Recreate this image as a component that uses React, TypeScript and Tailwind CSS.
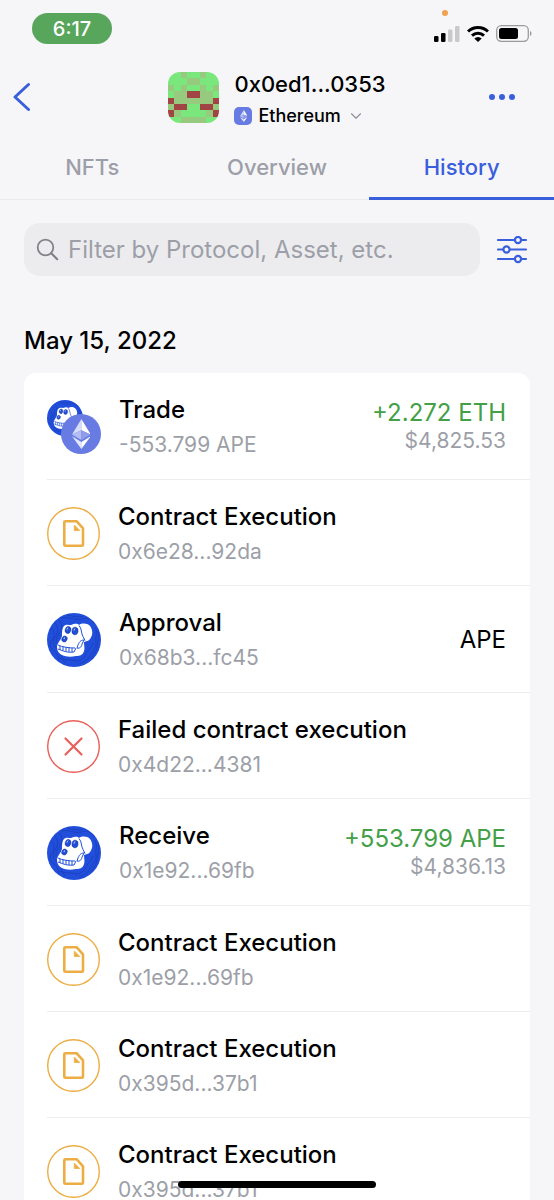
import { useState } from "react";
import { ChevronDown } from "lucide-react";

type TxKind = "trade" | "contract" | "ape" | "failed";

interface Transaction {
  id: number;
  kind: TxKind;
  title: string;
  detail: string;
  amount?: string;
  value?: string;
}

const transactions: Transaction[] = [
  { id: 1, kind: "trade", title: "Trade", detail: "-553.799 APE", amount: "+2.272 ETH", value: "$4,825.53" },
  { id: 2, kind: "contract", title: "Contract Execution", detail: "0x6e28...92da" },
  { id: 3, kind: "ape", title: "Approval", detail: "0x68b3...fc45", amount: "APE" },
  { id: 4, kind: "failed", title: "Failed contract execution", detail: "0x4d22...4381" },
  { id: 5, kind: "ape", title: "Receive", detail: "0x1e92...69fb", amount: "+553.799 APE", value: "$4,836.13" },
  { id: 6, kind: "contract", title: "Contract Execution", detail: "0x1e92...69fb" },
  { id: 7, kind: "contract", title: "Contract Execution", detail: "0x395d...37b1" },
  { id: 8, kind: "contract", title: "Contract Execution", detail: "0x395d...37b1" },
];

const tabs = ["NFTs", "Overview", "History"];

// left half of the identicon, the right half is mirrored
const blockie = ["ggmg", "gggm", "mgmg", "gmmr", "rmmm", "mrrg", "rmgg", "ggmm"];
const blockieColors: Record<string, string> = { g: "#79e77b", m: "#97c97f", r: "#a04444" };

function Blockie() {
  return (
    <svg viewBox="0 0 8 8" className="size-[51px] rounded-xl" shapeRendering="crispEdges">
      {blockie.map((row, y) =>
        [...row, ...[...row].reverse()].map((c, x) => (
          <rect key={`${x}-${y}`} x={x} y={y} width="1" height="1" fill={blockieColors[c]} />
        ))
      )}
    </svg>
  );
}

function EthDiamond({ className }: { className: string }) {
  return (
    <svg viewBox="0 0 20 32" className={className}>
      <path d="M10 0 0 16.5 10 12Z" fill="#d7dcf8" />
      <path d="M10 0v12l10 4.5Z" fill="#ffffff" />
      <path d="M0 16.5 10 12v10.4Z" fill="#b3bdf1" />
      <path d="M10 12l10 4.5-10 5.9Z" fill="#8e9ceb" />
      <path d="M0 18.5 10 24.4V32Z" fill="#e3e7fb" />
      <path d="M20 18.5 10 24.4V32Z" fill="#ffffff" />
    </svg>
  );
}

function ApeIcon({ className }: { className: string }) {
  return (
    <svg viewBox="0 0 54 54" className={className}>
      <circle cx="27" cy="27" r="27" fill="#214fdb" />
      <g fill="none" stroke="#1b3fbd" strokeWidth="0.9">
        <path d="M4 15c4 3 4 8 1 12s-2 8 2 11 4 7 5 10" />
        <path d="M8 10c4 4 3 10 0 14s-2 9 2 12 4 9 8 14" />
        <path d="M12 7c4 4 3 10 0 14s-3 7-3 10" />
        <path d="M14 5c8-2 13 3 20 1s10 0 14 5" />
        <path d="M20 2c6 1 10 3 16 1" />
        <path d="M48 14c3 5 0 10 1 15s-4 10-6 14-6 6-11 8" />
        <path d="M51 18c2 6-1 12-1 16s-4 8-6 12" />
        <path d="M46 30c-1 5-5 6-7 11s-6 6-10 8M12 45c6 3 12 1 18 3" />
      </g>
      <path
        d="M17 13c2-2 5-1 7-1 3-1 6-2 8 0 3-2 8-2 11 1 3 4 3 9 0 13-1 2-4 2-6 3 0 3 1 7 0 9-1 4-4 5-8 5-5 1-10 1-14-1-4-2-5-5-5-9 1-4 4-6 5-10 0-4 0-8 2-10Z"
        fill="#fff"
      />
      <g fill="#214fdb" stroke="#16349f" strokeWidth="0.6">
        <ellipse cx="21" cy="17" rx="2.8" ry="3.5" transform="rotate(15 21 17)" />
        <ellipse cx="28" cy="18" rx="3" ry="3.7" transform="rotate(10 28 18)" />
        <ellipse cx="17.5" cy="26" rx="2.6" ry="3" transform="rotate(25 17.5 26)" />
      </g>
      <g fill="none" stroke="#fff" strokeWidth="0.8">
        <path d="M20 16.500c0-1 .6-1.600 1.200-1.800M27 17.500c0-1 .6-1.700 1.200-2M17 26c0-.8.400-1.200 1-1.400" />
      </g>
      <g fill="none" stroke="#214fdb" strokeWidth="1">
        <path d="M32 12.500c3 3 2 8 4 11l2 4M37 27c-4 0-5 3-6 5l-1 3c3 1 5-2 5-4Z" />
        <path d="M11 32c4 2 11 3 17 3M11 36c5 2 10 4 16 3l2-4" />
        <path d="M13 33v4M16 33.500v4M19 34v4.500M22 34.500v4.500M25 35v4" />
      </g>
    </svg>
  );
}

function TxIcon({ kind }: { kind: TxKind }) {
  if (kind === "trade") {
    return (
      <div className="relative size-[54px] shrink-0">
        <ApeIcon className="size-9" />
        <span className="absolute right-0 bottom-0 flex size-10 items-center justify-center rounded-full bg-[#677be3]">
          <EthDiamond className="h-[30px]" />
        </span>
      </div>
    );
  }
  if (kind === "ape") return <ApeIcon className="size-[54px] shrink-0" />;
  if (kind === "failed") {
    return (
      <svg viewBox="0 0 53 53" fill="none" stroke="#e9605a" className="size-[53px] shrink-0">
        <circle cx="26.5" cy="26.5" r="25.8" strokeWidth="1.4" />
        <path d="m18.5 18.5 16 16m0-16-16 16" strokeWidth="2.2" strokeLinecap="round" />
      </svg>
    );
  }
  return (
    <svg viewBox="0 0 53 53" fill="none" stroke="#ecae44" className="size-[53px] shrink-0">
      <circle cx="26.5" cy="26.5" r="25.8" strokeWidth="1.4" />
      <path d="M18.300 14.300h11.500l6.200 7v16.400a1 1 0 0 1-1 1H18.300a1 1 0 0 1-1-1V15.300a1 1 0 0 1 1-1Z" strokeWidth="2.600" strokeLinejoin="round" />
      <path d="M27.300 18v5.500h5.500Z" fill="#ecae44" strokeWidth="0.800" strokeLinejoin="round" />
    </svg>
  );
}

function StatusBar() {
  return (
    <div className="flex h-[57px] items-start justify-between pl-8 pr-[22px]">
      <div className="mt-[13px] flex h-[31px] w-20 items-center justify-center rounded-full bg-[#58a55c] text-xl font-medium text-white">
        6:17
      </div>
      <div className="flex flex-col items-start">
        <span className="mt-[10px] ml-2 size-[6px] rounded-full bg-[#f0a24e]" />
        <div className="mt-[9px] flex items-center gap-[7px]">
          <svg viewBox="0 0 26 17" className="h-[17px] w-[26px]">
            <rect x="0" y="11" width="4.500" height="6" rx="1.300" />
            <rect x="7" y="8" width="4.500" height="9" rx="1.300" />
            <rect x="14" y="4.500" width="4.500" height="12.500" rx="1.300" fill="#c9c9cb" />
            <rect x="21" y="1" width="4.500" height="16" rx="1.300" fill="#c9c9cb" />
          </svg>
          <svg viewBox="0 0 22 16" className="h-4 w-[22px]">
            <g fill="none" stroke="#000" strokeWidth="3">
              <path d="M1 5.500a14.500 14.500 0 0 1 20 0" />
              <path d="M5 9.700a8.800 8.800 0 0 1 12 0" />
            </g>
            <path d="M11 16 7.300 12.400a5.300 5.300 0 0 1 7.400 0Z" />
          </svg>
          <svg viewBox="0 0 36 17" className="h-[17px] w-9">
            <rect x="0.700" y="0.700" width="31.600" height="15.600" rx="4.500" fill="none" stroke="#9b9b9e" strokeWidth="1.300" />
            <rect x="3" y="3" width="19" height="11" rx="2.500" />
            <path d="M34 6v5c2-.8 2-4.200 0-5Z" fill="#9b9b9e" />
          </svg>
        </div>
      </div>
    </div>
  );
}

function AccountHeader() {
  return (
    <header className="grid h-20 grid-cols-[1fr_auto_1fr] items-center px-3">
      <button aria-label="Back" className="justify-self-start">
        <svg viewBox="0 0 18 30" fill="none" stroke="#3a5fdc" strokeWidth="3" strokeLinecap="round" strokeLinejoin="round" className="h-[30px] w-[18px]">
          <path d="M16.500 2.500 3 15l13.500 12.500" />
        </svg>
      </button>
      <div className="flex items-center gap-[15px]">
        <Blockie />
        <div className="pt-[6px]">
          <div className="text-[22px] leading-7 font-medium">0x0ed1...0353</div>
          <button className="mt-1 flex items-center gap-[6px] text-lg leading-7 font-medium">
            <span className="flex size-[18px] items-center justify-center rounded-[5px] bg-[#677be3]">
              <EthDiamond className="h-3" />
            </span>
            Ethereum
            <ChevronDown className="size-[18px] text-[#8e8f94]" strokeWidth={1.5} />
          </button>
        </div>
      </div>
      <button aria-label="More" className="flex gap-1 justify-self-end pr-[27px]">
        <span className="size-[6px] rounded-full bg-[#3a5fdc]" />
        <span className="size-[6px] rounded-full bg-[#3a5fdc]" />
        <span className="size-[6px] rounded-full bg-[#3a5fdc]" />
      </button>
    </header>
  );
}

function TransactionRow({ tx }: { tx: Transaction }) {
  const positive = tx.amount?.startsWith("+");

  return (
    <li className="flex items-center gap-[18px] border-b border-[#ededf0] pt-[27px] pr-6 pb-[25px]">
      <TxIcon kind={tx.kind} />
      <div className="-my-[9px] min-w-0 flex-1">
        <div className="text-2xl leading-9 font-medium">{tx.title}</div>
        <div className="text-[21px] leading-[34px] text-[#9d9fa8]">{tx.detail}</div>
      </div>
      {tx.amount && (
        <div className="-my-[9px] text-right">
          <div className={positive ? "text-2xl leading-7 text-[#43a047]" : "text-2xl leading-7"}>{tx.amount}</div>
          {tx.value && <div className="text-[21px] leading-7 text-[#9d9fa8]">{tx.value}</div>}
        </div>
      )}
    </li>
  );
}

export default function App() {
  const [activeTab, setActiveTab] = useState("History");
  const [filter, setFilter] = useState("");

  return (
    <div className="flex h-screen flex-col overflow-hidden bg-[#f6f6f9] font-[Inter,sans-serif] text-black">
      <StatusBar />
      <AccountHeader />
      <nav className="grid h-[63px] shrink-0 grid-cols-3 border-b border-[#ebebee]">
        {tabs.map((tab) => (
          <button
            key={tab}
            onClick={() => setActiveTab(tab)}
            className={
              tab === activeTab
                ? "-mb-px border-b-3 border-[#3a5fdc] text-[22px] font-medium text-[#3a5fdc]"
                : "-mb-px border-b-3 border-transparent text-[22px] font-medium text-[#9d9fa8]"
            }
          >
            {tab}
          </button>
        ))}
      </nav>

      <main className="min-h-0 flex-1 overflow-hidden px-6 pt-[23px]">
        <div className="flex items-center gap-[17px]">
          <label className="flex h-[53px] min-w-0 flex-1 items-center gap-[9px] rounded-2xl bg-[#ececee] px-3">
            <svg viewBox="0 0 23 23" fill="none" stroke="#828388" strokeWidth="1.800" strokeLinecap="round" className="size-[23px] shrink-0">
              <circle cx="9.500" cy="9.500" r="7.800" />
              <path d="m15.200 15.200 6 6" strokeWidth="2.200" />
            </svg>
            <input
              type="text"
              aria-label="Filter"
              value={filter}
              onChange={(e) => setFilter(e.target.value)}
              placeholder="Filter by Protocol, Asset, etc."
              className="min-w-0 flex-1 bg-transparent text-2xl outline-none placeholder:text-[#9d9fa8]"
            />
          </label>
          <button aria-label="Filters" className="pr-[2px]">
            <svg viewBox="0 0 31 28" fill="none" stroke="#3a5fdc" strokeWidth="2.200" strokeLinecap="round" className="h-7 w-[31px]">
              <path d="M1 4h16M25 4h4M1 13.500h5M13 13.500h16M1 23h16M25 23h4" />
              <circle cx="21" cy="4" r="3.100" />
              <circle cx="9.500" cy="13.500" r="3.100" />
              <circle cx="21" cy="23" r="3.100" />
            </svg>
          </button>
        </div>

        <h2 className="mt-[47px] text-2xl leading-9 font-medium">May 15, 2022</h2>
        <ul className="mt-[14px] rounded-t-xl bg-white pl-[23px]">
          {transactions.map((tx) => (
            <TransactionRow key={tx.id} tx={tx} />
          ))}
        </ul>
      </main>

      <div className="fixed inset-x-0 bottom-3 mx-auto h-[7px] w-[198px] rounded-full bg-black" />
    </div>
  );
}
